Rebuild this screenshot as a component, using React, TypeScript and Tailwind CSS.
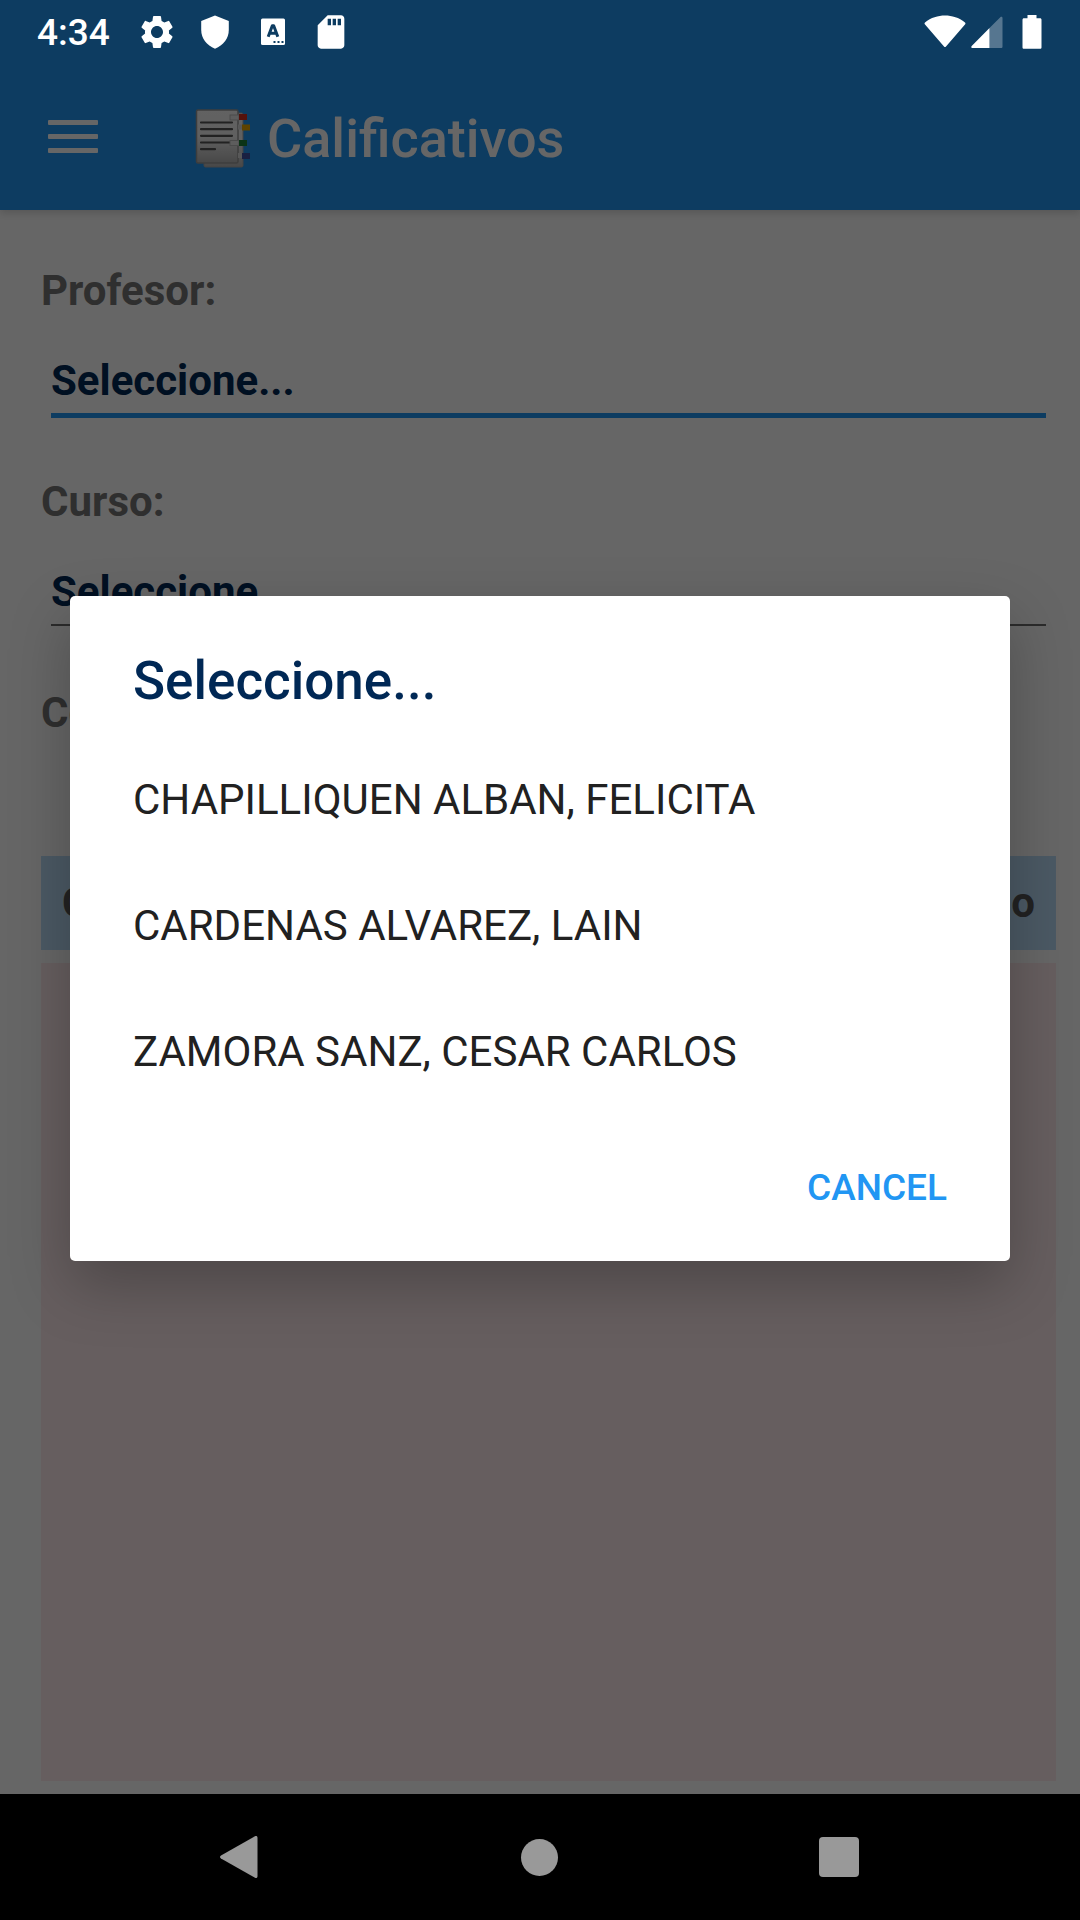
import { useState } from "react";
import { MdSettings, MdSdCard } from "react-icons/md";

const teachers = [
  "CHAPILLIQUEN ALBAN, FELICITA",
  "CARDENAS ALVAREZ, LAIN",
  "ZAMORA SANZ, CESAR CARLOS",
];

function StatusBar() {
  return (
    <div className="relative z-20 flex h-[63px] items-center justify-between pl-[37px] pr-[38px] text-white">
      <div className="flex items-center">
        <span className="w-[100px] pt-[3px] text-[37px] font-medium leading-[42px]">4:34</span>
        <MdSettings className="size-[40px]" aria-hidden="true" />
        <svg className="ml-[18px] size-[40px]" viewBox="0 0 40 40" fill="currentColor" aria-hidden="true">
          <path d="M20 3.500 33.800 9v9c0 8.500-5.500 15.500-13.800 18.700C11.700 33.500 6.200 26.500 6.200 18V9z" />
        </svg>
        <svg className="ml-[18px] size-[40px]" viewBox="0 0 40 40" aria-hidden="true">
          <rect x="8" y="6.500" width="24" height="26.500" rx="1.500" fill="#fff" />
          <path d="M15.200 24.800 19.300 13.800h1.400L24.800 24.800M17 21.200h6" fill="none" stroke="#0d3c61" strokeWidth="3" strokeLinejoin="round" />
          <path d="M20.500 29h2v2h-2zM24.500 29h2v2h-2zM28.500 29h2v2h-2z" fill="#0d3c61" />
        </svg>
        <MdSdCard className="ml-[18px] size-[40px]" aria-hidden="true" />
      </div>
      <div className="flex items-center">
        <svg className="h-[34px] w-[42px]" viewBox="0 0 42 34" fill="currentColor" aria-hidden="true">
          <path d="M1 7.500C7 2.500 14 0.500 21 0.500s14 2 20 7c.6.500.6 1.200.2 1.800L22 31.500c-.6.700-1.400.700-2 0L.8 9.300C.4 8.700.4 8 1 7.500z" />
        </svg>
        <svg className="ml-[5px] h-[34px] w-[32px]" viewBox="0 0 32 34" fill="currentColor" aria-hidden="true">
          <path d="M18.500 13 29.300 2.300c.9-.9 2.200-.5 2.200.8v28.400c0 1-.5 1.500-1.500 1.500H18.500z" opacity=".3" />
          <path d="M18.500 13V33H1.500c-1.200 0-1.600-1.200-.8-2z" />
        </svg>
        <svg className="ml-[19px] h-[34px] w-[20px]" viewBox="0 0 20 34" fill="currentColor" aria-hidden="true">
          <path d="M5.500 0h9v3.300H18c1 0 1.500.600 1.500 1.500v27.500c0 1-.500 1.500-1.500 1.500H2c-1 0-1.500-.500-1.500-1.500V4.800c0-.900.500-1.500 1.500-1.500h3.500z" />
        </svg>
      </div>
    </div>
  );
}

function TabsIcon() {
  return (
    <svg className="h-[60px] w-[56px]" viewBox="0 0 56 60" aria-hidden="true">
      <defs>
        <linearGradient id="sheet" x1="0" y1="0" x2="0" y2="1">
          <stop offset="0" stopColor="#f4f4f4" />
          <stop offset=".5" stopColor="#f0f0f0" />
          <stop offset="1" stopColor="#b4b4b4" />
        </linearGradient>
      </defs>
      <rect x="9" y="4" width="39" height="54" rx="1.500" fill="url(#sheet)" stroke="#a8a8a8" />
      <rect x="1.500" y="1" width="41.500" height="53" rx="1.500" fill="url(#sheet)" stroke="#999" strokeWidth="1.500" />
      <path d="M6 13.500h31M6 20.200h31M6 26.800h31M6 33.500h31M6 40.200h14" stroke="#555" strokeWidth="2.200" strokeLinecap="round" />
      <rect x="35" y="6" width="9" height="5" fill="#e8e8e8" stroke="#bbb" />
      <rect x="44" y="5" width="8" height="6" fill="#d32f1f" />
      <rect x="43" y="15.500" width="4" height="5" fill="#ddd" />
      <rect x="47" y="15.500" width="8" height="6" fill="#eba900" />
      <rect x="35" y="31.500" width="9" height="5" fill="#e8e8e8" stroke="#bbb" />
      <rect x="44" y="31" width="8" height="6" fill="#1c8035" />
      <rect x="43" y="44" width="4" height="5" fill="#ddd" />
      <rect x="47" y="44" width="8" height="6" fill="#3f51a5" />
    </svg>
  );
}

export default function App() {
  const [open, setOpen] = useState(true);
  const [teacher, setTeacher] = useState("Seleccione...");

  return (
    <div className="relative flex min-h-screen flex-col bg-white font-['Roboto',sans-serif]">
      <header className="bg-[#2196f3] shadow-[0_3px_8px_rgba(0,0,0,0.16)]">
        <StatusBar />
        <div className="flex h-[147px] items-center pl-[48px]">
          <button type="button" aria-label="Menú" className="flex w-[50px] flex-col gap-[9px]">
            <span className="h-[5px] rounded-[1px] bg-white" />
            <span className="h-[5px] rounded-[1px] bg-white" />
            <span className="h-[5px] rounded-[1px] bg-white" />
          </button>
          <h1 className="ml-[97px] flex items-center gap-[16px] pt-[5px] text-[54px] font-medium leading-[60px] text-white">
            <TabsIcon />
            Calificativos
          </h1>
        </div>
      </header>

      <main className="flex flex-1 flex-col pb-[13px] pl-[41px] pr-[24px] pt-[57px] text-[42px] font-bold leading-[48px] text-[#757575]">
        <label htmlFor="profesor">Profesor:</label>
        <select
          id="profesor"
          value={teacher}
          onChange={(e) => setTeacher(e.target.value)}
          className="mx-[10px] mb-[60px] mt-[30px] h-[73px] appearance-none border-b-[5px] border-[#2196f3] pt-[4px] text-[#002855]"
        >
          <option>Seleccione...</option>
          {teachers.map((name) => (
            <option key={name}>{name}</option>
          ))}
        </select>
        <label htmlFor="curso">Curso:</label>
        <select
          id="curso"
          className="mx-[10px] mb-[63px] mt-[30px] h-[70px] appearance-none border-b-[2px] border-[#6d6d6d] pt-[4px] text-[#002855]"
        >
          <option>Seleccione...</option>
        </select>
        <p>Co.</p>
        <table className="mt-[119px] w-full bg-[#bbdefb] text-[#555]">
          <thead>
            <tr className="h-[94px]">
              <th className="pl-[21px] text-left">C.</th>
              <th className="pr-[21px] text-right">Promedio</th>
            </tr>
          </thead>
        </table>
        <div className="mt-[13px] flex-1 bg-[#ffebee]" />
      </main>

      <nav className="relative z-20 grid h-[126px] grid-cols-3 place-items-center bg-black pl-[89px] pr-[91px] text-[#999]">
        <button type="button" aria-label="Atrás">
          <svg className="size-[42px]" viewBox="0 0 42 42" fill="currentColor">
            <path d="M37 .3c1.300-.7 2.500 0 2.500 1.500v38.400c0 1.500-1.200 2.200-2.500 1.500L3 22.500c-1.300-.800-1.300-2.200 0-3z" />
          </svg>
        </button>
        <button type="button" aria-label="Inicio" className="size-[37px] rounded-full bg-[#999]" />
        <button type="button" aria-label="Recientes" className="size-[40px] rounded-[4px] bg-[#999]" />
      </nav>

      {open && (
        <div className="absolute inset-0 z-10 flex items-center bg-black/60 px-[70px] pb-[126px] pt-[63px]">
          <div
            role="dialog"
            aria-modal="true"
            aria-labelledby="dialog-title"
            className="w-full rounded-[5px] bg-white pt-[54px] shadow-[0_24px_60px_rgba(0,0,0,0.25)]"
          >
            <h2 id="dialog-title" className="mb-[25px] px-[63px] text-[53px] font-medium leading-[62px] text-[#002855]">
              Seleccione...
            </h2>
            <ul>
              {teachers.map((name) => (
                <li key={name}>
                  <button
                    type="button"
                    onClick={() => {
                      setTeacher(name);
                      setOpen(false);
                    }}
                    className="h-[126px] w-full px-[63px] text-left text-[42px] leading-[48px] text-[#212121]"
                  >
                    {name}
                  </button>
                </li>
              ))}
            </ul>
            <div className="flex h-[146px] items-center justify-end pr-[42px]">
              <button
                type="button"
                onClick={() => setOpen(false)}
                className="h-[94px] px-[21px] text-[37px] font-medium leading-[42px] text-[#2196f3]"
              >
                CANCEL
              </button>
            </div>
          </div>
        </div>
      )}
    </div>
  );
}
